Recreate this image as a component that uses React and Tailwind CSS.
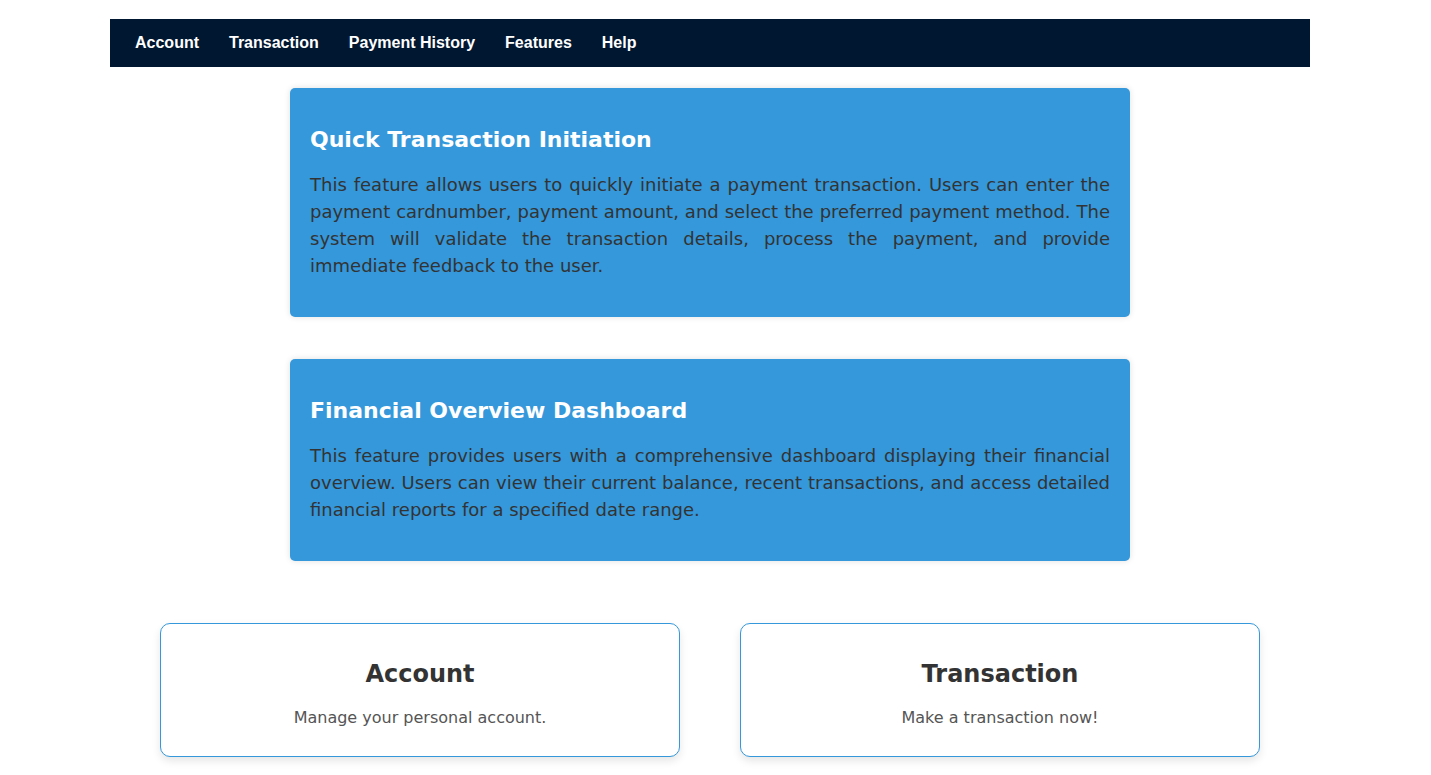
const navLinks = ["Account", "Transaction", "Payment History", "Features", "Help"];

const features = [
  {
    title: "Quick Transaction Initiation",
    text: "This feature allows users to quickly initiate a payment transaction. Users can enter the payment cardnumber, payment amount, and select the preferred payment method. The system will validate the transaction details, process the payment, and provide immediate feedback to the user.",
  },
  {
    title: "Financial Overview Dashboard",
    text: "This feature provides users with a comprehensive dashboard displaying their financial overview. Users can view their current balance, recent transactions, and access detailed financial reports for a specified date range.",
  },
];

const tiles = [
  { title: "Account", text: "Manage your personal account." },
  { title: "Transaction", text: "Make a transaction now!" },
];

const App = () => {
  return (
    <div className="w-[1420px] min-h-screen bg-white font-['DejaVu_Sans',Verdana,sans-serif] text-[#333]">
      <div className="w-[1200px] mx-auto pt-[19px]">
        <nav className="h-[48px] bg-[#001731] flex items-center px-[10px]">
          {navLinks.map((link) => (
            <a
              key={link}
              href="#"
              className="px-[15px] text-white font-bold text-[16px] font-['Liberation_Sans',Arial,sans-serif]"
            >
              {link}
            </a>
          ))}
        </nav>

        <div className="flex flex-col items-center gap-[42px] mt-[21px]">
          {features.map((f) => (
            <div
              key={f.title}
              className="w-[840px] bg-[#3498db] rounded-[5px] shadow-[0_0_6px_rgba(0,0,0,0.12)] px-[20px] pt-[39px] pb-[38px]"
            >
              <h2 className="text-white font-bold text-[22px] leading-[26px] mb-[18px]">
                {f.title}
              </h2>
              <p className="text-[18px] leading-[27px] text-justify text-[#333]">
                {f.text}
              </p>
            </div>
          ))}
        </div>

        <div className="flex justify-center gap-[60px] mt-[62px]">
          {tiles.map((t) => (
            <div
              key={t.title}
              className="w-[520px] border border-[#3498db] rounded-[10px] shadow-[0_4px_8px_rgba(0,0,0,0.1)] bg-white text-center pt-[36px] pb-[29px]"
            >
              <h3 className="font-bold text-[24px] leading-[28px] text-[#333] mb-[20px]">
                {t.title}
              </h3>
              <p className="text-[16px] leading-[19px] text-[#555]">{t.text}</p>
            </div>
          ))}
        </div>
      </div>
    </div>
  );
};

export default App;
